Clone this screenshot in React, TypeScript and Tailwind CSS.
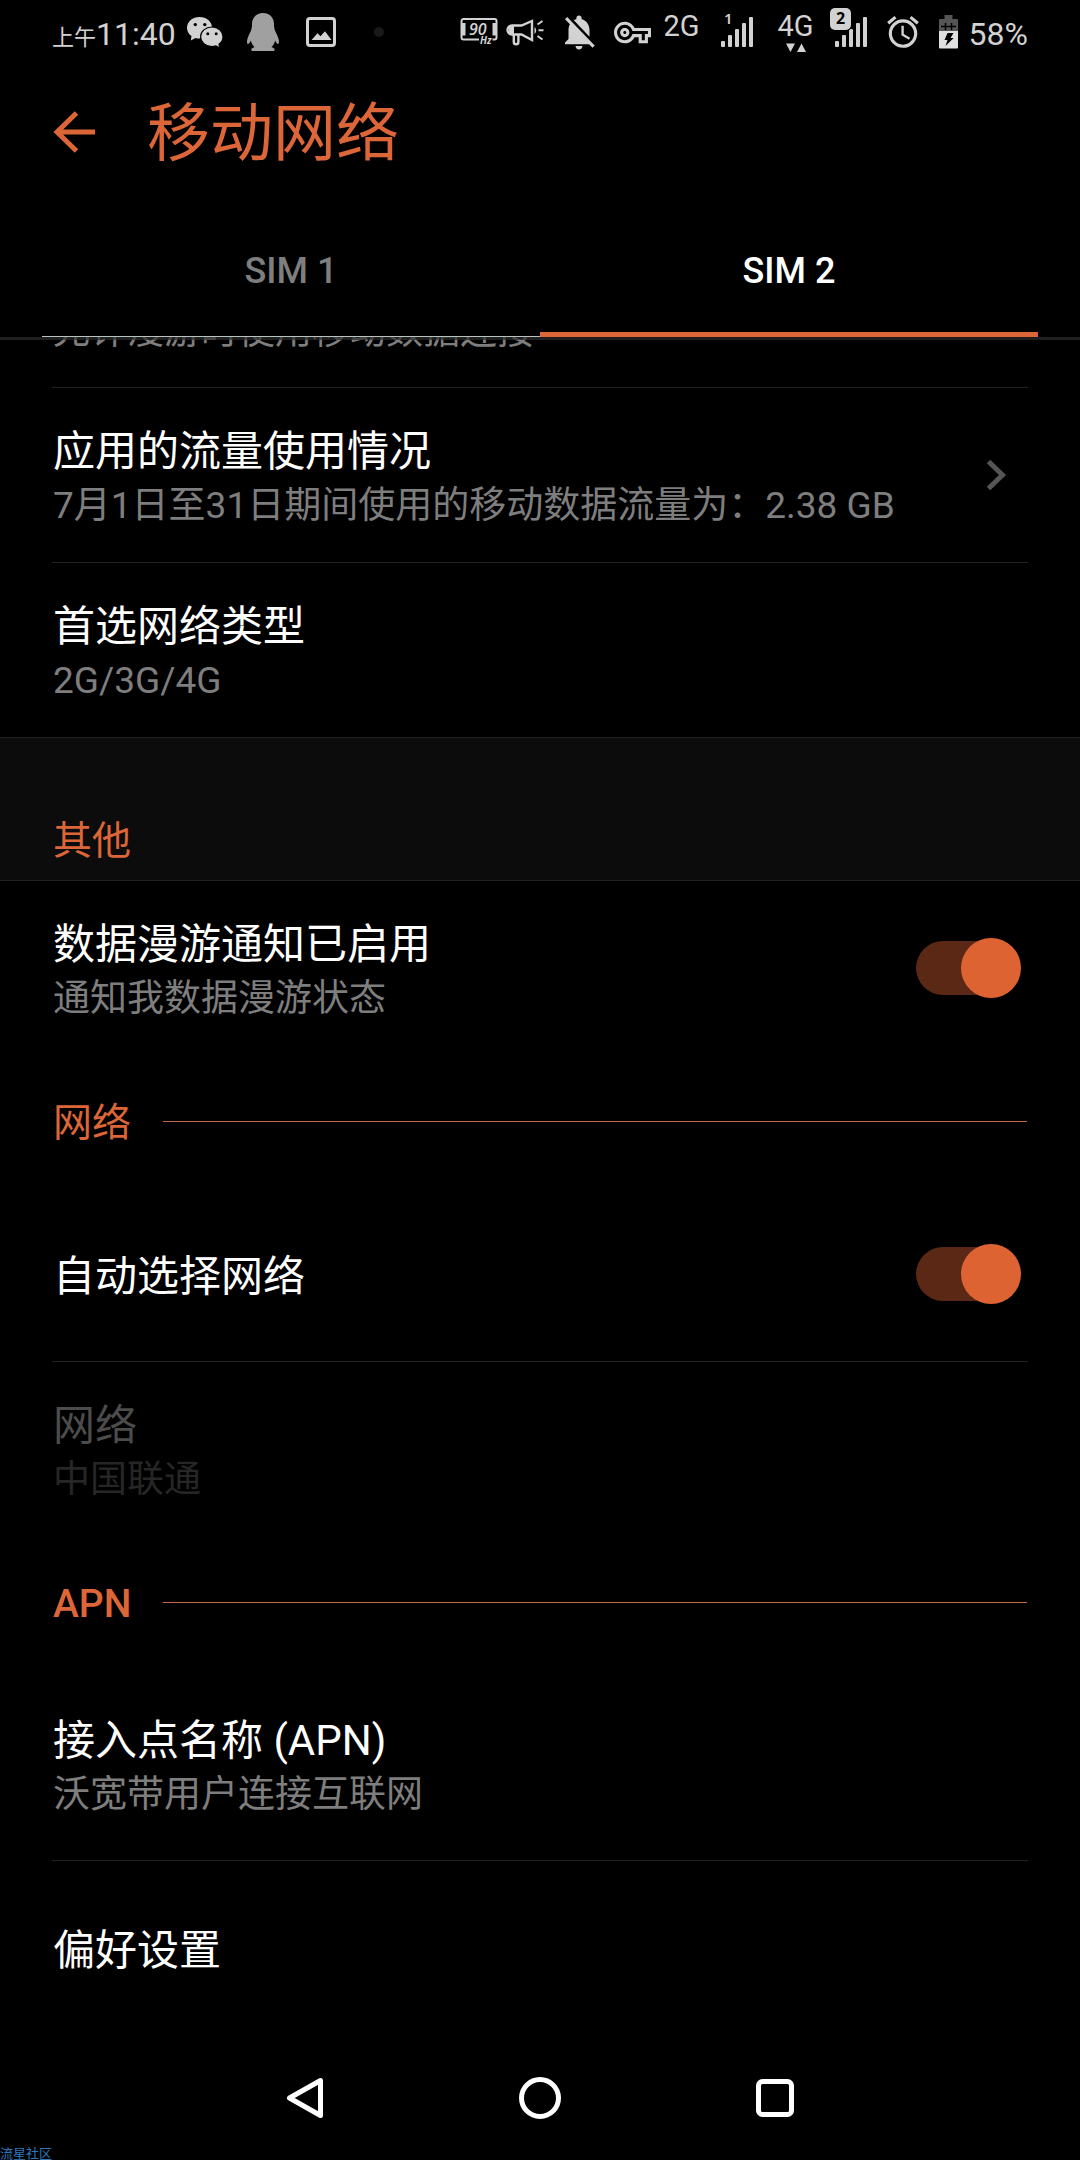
import type { ReactNode } from "react";
import { MdAlarm, MdNotificationsOff, MdOutlineVpnKey } from "react-icons/md";

function WeChatIcon() {
  return (
    <svg width="36" height="32" viewBox="0 0 36 32" fill="#d2d2d2">
      <path d="M12.500 1C5.500 1 0 5.700 0 11.800c0 3.400 1.700 6.300 4.500 8.300L3.800 24.500l4.700-2.600c1.300.400 2.600.600 4 .600C19.500 22.500 25 17.900 25 11.800S19.500 1 12.500 1z" />
      <circle cx="8.300" cy="8.600" r="1.700" fill="#000" />
      <circle cx="17.800" cy="8.600" r="1.700" fill="#000" />
      <path
        d="M24.800 11c-6.200 0-11.200 4.300-11.200 9.800s5 9.800 11.200 9.800c1.500 0 2.900-.200 4.100-.700l4 2.100-.900-3.700c2.500-1.800 4-4.500 4-7.500 0-5.500-5-9.800-11.200-9.800z"
        stroke="#000"
        strokeWidth="1.200"
      />
      <circle cx="20.800" cy="17.800" r="1.500" fill="#000" />
      <circle cx="29.200" cy="17.800" r="1.500" fill="#000" />
    </svg>
  );
}

function QQIcon() {
  return (
    <svg width="32" height="38" viewBox="0 0 32 38" fill="#a0a0a0">
      <path d="M16 0C9.500 0 5 4.600 5 11c0 2.400-.200 4.600-1.200 7C1.500 22.500 0 26 0 28.500c0 1.500.300 2.500.900 2.500.900 0 2-1.500 3-3.500.500 2.600 1.800 5 3.700 6.800C5.800 34.700 4.300 35.500 4.300 36.500c0 1 .700 1.500 2 1.500h19.400c1.300 0 2-.500 2-1.500 0-1-1.500-1.800-3.300-2.200 1.900-1.800 3.200-4.200 3.700-6.800 1 2 2.100 3.500 3 3.500.600 0 .900-1 .900-2.500 0-2.500-1.500-6-3.800-10.500-1-2.400-1.200-4.600-1.200-7C27 4.600 22.500 0 16 0z" />
    </svg>
  );
}

function PictureIcon() {
  return (
    <svg width="30" height="30" viewBox="0 0 30 30">
      <rect x="1.500" y="1.500" width="27" height="27" rx="2.500" fill="none" stroke="#d2d2d2" strokeWidth="3" />
      <path d="M5.500 23l6-6.800 3 3 4.500-5 6.500 8.800z" fill="#d2d2d2" />
    </svg>
  );
}

function RefreshRateIcon() {
  return (
    <svg width="38" height="30" viewBox="0 0 38 30" fill="#d2d2d2">
      <path
        d="M19 22.500H3.500a2 2 0 0 1-2-2V4a2 2 0 0 1 2-2h31a2 2 0 0 1 2 2v16.500a2 2 0 0 1-2 2h-2"
        fill="none"
        stroke="#d2d2d2"
        strokeWidth="2"
      />
      <path d="M2 6h3.500v12.500H2zM32.500 6H36v12.500h-3.500z" />
      <text x="9" y="18" fontFamily="Open Sans" fontSize="16" fontStyle="italic" fontWeight="600">
        90
      </text>
      <text x="20" y="27" fontFamily="Open Sans" fontSize="10" fontStyle="italic" fontWeight="700">
        Hz
      </text>
    </svg>
  );
}

function MegaphoneIcon() {
  return (
    <svg width="38" height="28" viewBox="0 0 38 28" fill="none" stroke="#d2d2d2" strokeWidth="2.400">
      <path d="M26 3v19L15.500 16.500H6a4.500 4.500 0 0 1 0-9h9.500z" />
      <path d="M3 7.500v9l5 .500v-10z" fill="#d2d2d2" stroke="none" />
      <path d="M7.800 16.500v7.500a2.300 2.300 0 0 0 4.600 0v-7.500" />
      <path d="M28.500 9a4.500 4.500 0 0 1 0 7z" fill="#d2d2d2" stroke="none" />
      <path d="M32.500 12.300h5M31.500 6.500l5-3.500M31.500 18l5 3.500" strokeWidth="2" />
    </svg>
  );
}

function SignalBars({ x }: { x: number }) {
  return (
    <g fill="#d2d2d2">
      <rect x={x} y="33" width="4" height="6" rx="1" />
      <rect x={x + 7} y="27" width="4" height="12" rx="1" />
      <rect x={x + 14} y="21" width="4" height="18" rx="1" />
      <rect x={x + 21} y="15" width="4" height="24" rx="1" />
      <rect x={x + 28} y="9" width="4" height="30" rx="1" />
    </g>
  );
}

function SignalOne() {
  return (
    <svg width="34" height="48" viewBox="0 0 34 48">
      <SignalBars x={1} />
      <text x="4" y="16" fill="#d2d2d2" fontFamily="Noto Sans" fontSize="15" fontWeight="600">
        1
      </text>
    </svg>
  );
}

function SignalTwo() {
  return (
    <svg width="38" height="48" viewBox="0 0 38 48">
      <SignalBars x={5} />
      <rect x="-1" y="-1" width="23" height="24" rx="6" fill="#000" />
      <rect x="0" y="0" width="21" height="22" rx="5" fill="#d2d2d2" />
      <text x="6" y="16" fill="#000" fontFamily="Noto Sans" fontSize="16" fontWeight="700">
        2
      </text>
    </svg>
  );
}

function BatteryIcon() {
  return (
    <svg width="20" height="34" viewBox="0 0 20 34">
      <path d="M5.500 0h8v4H18a1 1 0 0 1 1 1v11H0V5a1 1 0 0 1 1-1h4.500z" fill="#555" />
      <path d="M2 11.500h15M6.500 8v7M12.500 8v7" stroke="#000" strokeWidth="1.500" />
      <path d="M0 16h19v16.500a1 1 0 0 1-1 1H1a1 1 0 0 1-1-1z" fill="#e0e0e0" />
      <path d="M8.500 18h6l-3 5h3.200L6.500 31l2-6H5.500z" fill="#000" />
    </svg>
  );
}

function IconSlot({ className, children }: { className: string; children: ReactNode }) {
  return <span className={`flex shrink-0 items-center justify-center ${className}`}>{children}</span>;
}

function StatusBar() {
  return (
    <div className="flex h-16 items-center justify-between px-[52px] text-[32px] leading-10 text-[#d2d2d2]">
      <div className="flex items-center">
        <span className="flex items-baseline pt-1 whitespace-nowrap">
          <span className="text-[22px] leading-6">上午</span>
          <span>11:40</span>
        </span>
        <IconSlot className="w-[58px]">
          <WeChatIcon />
        </IconSlot>
        <IconSlot className="w-[58px]">
          <QQIcon />
        </IconSlot>
        <IconSlot className="w-[58px]">
          <PictureIcon />
        </IconSlot>
        <IconSlot className="w-[58px]">
          <span className="size-[10px] rounded-full bg-[#1a1a1a]" />
        </IconSlot>
      </div>
      <div className="flex items-center">
        <RefreshRateIcon />
        <IconSlot className="w-[54px]">
          <MegaphoneIcon />
        </IconSlot>
        <IconSlot className="w-[54px]">
          <MdNotificationsOff size={42} />
        </IconSlot>
        <IconSlot className="w-[54px]">
          <MdOutlineVpnKey size={37} />
        </IconSlot>
        <span className="flex w-11 flex-col items-center text-[29px] leading-[30px]">
          2G
          <span className="h-3" />
        </span>
        <IconSlot className="w-[66px]">
          <SignalOne />
        </IconSlot>
        <span className="flex w-[52px] flex-col items-center text-[29px] leading-[30px]">
          4G
          <svg width="20" height="12" viewBox="0 0 20 12" fill="#d2d2d2">
            <path d="M0 2.500h9L4.500 11zM11 11h9l-4.500-8.500z" />
          </svg>
        </span>
        <IconSlot className="w-[54px]">
          <SignalTwo />
        </IconSlot>
        <IconSlot className="w-[54px]">
          <MdAlarm size={38} />
        </IconSlot>
        <IconSlot className="w-[39px]">
          <BatteryIcon />
        </IconSlot>
        <span className="pt-1">58%</span>
      </div>
    </div>
  );
}

function RowText({ title, summary, disabled }: { title: string; summary?: string; disabled?: boolean }) {
  return (
    <span className="flex flex-1 flex-col pt-[6px] text-left">
      <span className={`text-[42px] leading-[56px] ${disabled ? "text-[#4c4c4c]" : "text-white"}`}>{title}</span>
      {summary && (
        <span className={`text-[37px] leading-[52px] ${disabled ? "text-[#262626]" : "text-[#7e7e7e]"}`}>
          {summary}
        </span>
      )}
    </span>
  );
}

type RowProps = {
  title: string;
  summary?: string;
  disabled?: boolean;
  chevron?: boolean;
  tall?: boolean;
};

function Row({ title, summary, disabled, chevron, tall }: RowProps) {
  return (
    <button
      type="button"
      disabled={disabled}
      className={`flex w-full items-center px-[53px] ${tall ? "min-h-[192px]" : "min-h-[174px]"}`}
    >
      <RowText title={title} summary={summary} disabled={disabled} />
      {chevron && (
        <svg className="mr-5 shrink-0" width="22" height="32" viewBox="0 0 22 32">
          <path d="M3.500 2.500L17.500 16 3.500 29.500" fill="none" stroke="#555" strokeWidth="5" />
        </svg>
      )}
    </button>
  );
}

function SwitchRow({ title, summary }: { title: string; summary?: string }) {
  return (
    <label className="flex min-h-[174px] items-center px-[53px]">
      <RowText title={title} summary={summary} />
      <input
        type="checkbox"
        role="switch"
        defaultChecked
        className="relative mr-[9px] h-[54px] w-[102px] shrink-0 appearance-none rounded-full bg-[#333] before:absolute before:-top-[3px] before:-left-[3px] before:size-[60px] before:rounded-full before:bg-[#888] checked:bg-[#5a2815] checked:before:right-[-3px] checked:before:left-auto checked:before:bg-[#de6333]"
      />
    </label>
  );
}

function Divider() {
  return <hr className="mx-[52px] border-[#222]" />;
}

function GroupHeading({ children, latin }: { children: ReactNode; latin?: boolean }) {
  return (
    <div className="flex h-[132px] items-center gap-8 px-[53px]">
      <h2 className={`pt-1 text-[39px] leading-[50px] text-[#dc6638] ${latin ? "font-medium" : "font-normal"}`}>
        {children}
      </h2>
      <span className="h-px flex-1 bg-[#c8674d]" />
    </div>
  );
}

export default function App() {
  return (
    <div
      lang="zh-CN"
      className="relative flex min-h-screen flex-col bg-black font-['Roboto','Noto_Sans_CJK_SC',sans-serif]"
    >
      <StatusBar />
      <header className="flex h-[136px] items-center gap-[52px] px-[53px]">
        <button type="button" aria-label="返回">
          <svg width="42" height="42" viewBox="0 0 42 42" fill="none" stroke="#dc6638" strokeWidth="5">
            <path d="M42 21H4M23.500 2L4 21l19.500 19" />
          </svg>
        </button>
        <h1 className="pt-1 text-[63px] leading-[84px] text-[#dc6638]">移动网络</h1>
      </header>
      <div role="tablist" className="grid grid-cols-2 px-[42px] text-[36px] leading-[50px] font-medium">
        <button type="button" role="tab" aria-selected="false" className="flex flex-col pt-[10px] text-[#7e7e7e]">
          <span className="flex h-[122px] w-full items-center justify-center">SIM 1</span>
          <span className="h-[5px] w-full border-b border-[#b9c4be]" />
        </button>
        <button type="button" role="tab" aria-selected="true" className="flex flex-col pt-[10px] text-white">
          <span className="flex h-[122px] w-full items-center justify-center">SIM 2</span>
          <span className="h-[5px] w-full bg-[#dc6638]" />
        </button>
      </div>

      <main className="relative">
        <span className="absolute inset-x-0 top-0 h-[3px] bg-[#2c2c2c]/70" />
        {/* summary of the row scrolled under the tab bar */}
        <div className="flex h-[50px] items-end overflow-hidden px-[53px] pb-[30px]">
          <p className="text-[37px] leading-[50px] text-[#7e7e7e]">允许漫游时使用移动数据连接</p>
        </div>
        <Divider />
        <Row title="应用的流量使用情况" summary="7月1日至31日期间使用的移动数据流量为：2.38 GB" chevron />
        <Divider />
        <Row title="首选网络类型" summary="2G/3G/4G" />

        <div className="flex h-36 items-end border-y border-[#222] bg-[#0c0c0c] px-[53px] pb-[14px]">
          <h2 className="text-[39px] leading-[50px] text-[#dc6638]">其他</h2>
        </div>
        <SwitchRow title="数据漫游通知已启用" summary="通知我数据漫游状态" />

        <GroupHeading>网络</GroupHeading>
        <SwitchRow title="自动选择网络" />
        <Divider />
        <Row title="网络" summary="中国联通" disabled />

        <GroupHeading latin>APN</GroupHeading>
        <Row title="接入点名称 (APN)" summary="沃宽带用户连接互联网" tall />
        <Divider />
        <Row title="偏好设置" />
      </main>

      <nav className="mt-auto flex h-[125px] items-center justify-center gap-[193px]">
        <button type="button" aria-label="返回上一页">
          <svg width="42" height="42" viewBox="0 0 42 42" fill="none" stroke="#fff" strokeWidth="5" strokeLinejoin="round">
            <path d="M36.500 3.500v35L5.500 21z" />
          </svg>
        </button>
        <button type="button" aria-label="主屏幕">
          <svg width="42" height="42" viewBox="0 0 42 42" fill="none" stroke="#fff" strokeWidth="5">
            <circle cx="21" cy="21" r="18.500" />
          </svg>
        </button>
        <button type="button" aria-label="最近任务">
          <svg width="42" height="42" viewBox="0 0 42 42" fill="none" stroke="#fff" strokeWidth="5">
            <rect x="4.500" y="4.500" width="33" height="33" rx="4" />
          </svg>
        </button>
      </nav>
      <span className="absolute bottom-0 left-0 text-[13px] leading-3 text-[#2f78bd]">流星社区</span>
    </div>
  );
}
